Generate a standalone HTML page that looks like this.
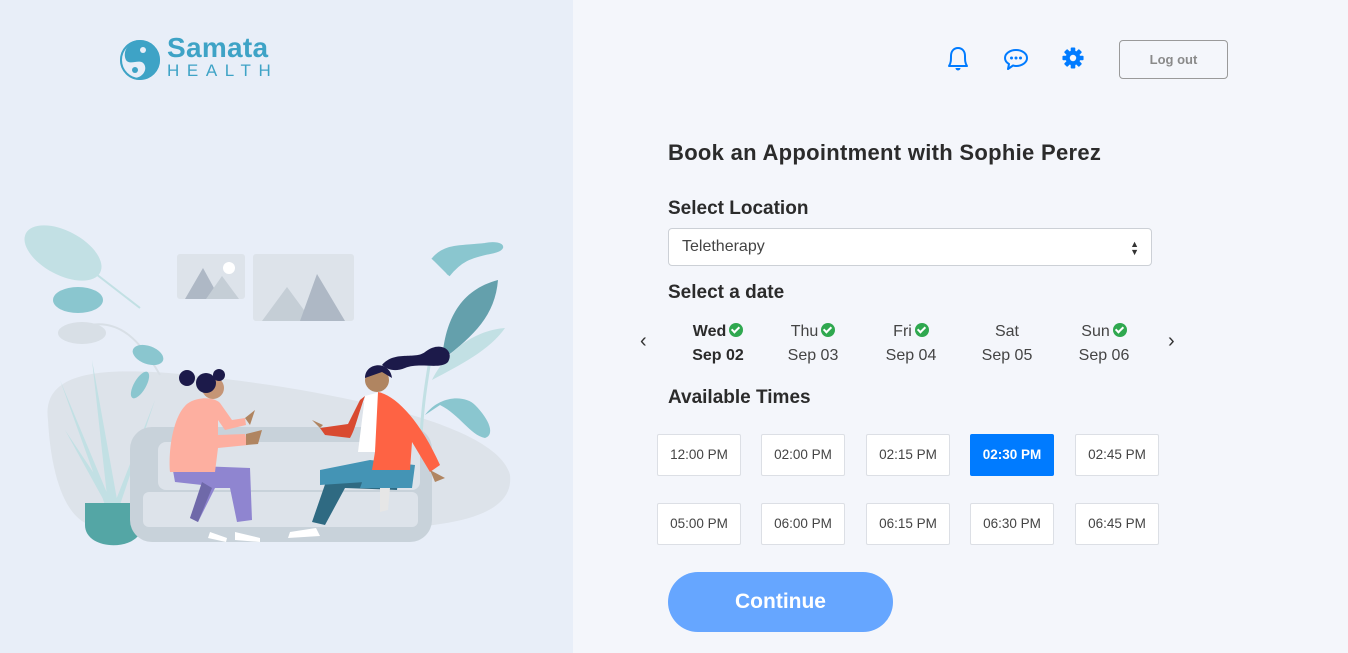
<!DOCTYPE html>
<html><head><meta charset="utf-8"><style>
*{margin:0;padding:0;box-sizing:border-box}
body{width:1348px;height:653px;overflow:hidden;font-family:"Liberation Sans",sans-serif;background:#f4f6fb;position:relative;color:#2b2b2b}
.left{position:absolute;left:0;top:0;width:573px;height:653px;background:#e8eef8}
.a{position:absolute}
.h{font-weight:bold;font-size:20px;color:#2b2b2b}
.day{position:absolute;width:90px;text-align:center;font-size:16px;color:#444;line-height:24px}
.day b{color:#2b2b2b}
.ck{display:inline-block;width:14px;height:14px;border-radius:50%;background:#2fa84f;vertical-align:-1px;margin-left:3px;position:relative}
.ck:after{content:"";position:absolute;left:4px;top:2px;width:3px;height:6px;border:solid #fff;border-width:0 2px 2px 0;transform:rotate(45deg)}
.t{position:absolute;width:84px;height:42px;background:#fff;border:1px solid #dcdfe5;border-radius:2px;font-size:13.5px;color:#444;text-align:center;line-height:40px}
.t.s{background:#007bff;border-color:#007bff;color:#fff;font-weight:bold}
</style></head><body>
<div class="left"></div>
<!-- logo -->
<svg class="a" style="left:118px;top:38px" width="44" height="44" viewBox="0 0 44 44">
<circle cx="22" cy="22" r="20" fill="#3ea3c6"/>
<path d="M22 3 C10 3 4 14 8 22 C12 28 22 20 26 26 C30 32 24 40 16 40 C8 37 3 30 3 22 C3 12 11 3 22 3Z" fill="#e8eef8"/>
<circle cx="22" cy="22" r="19" fill="none" stroke="#3ea3c6" stroke-width="2"/>
<circle cx="25" cy="12" r="3" fill="#e8eef8"/><circle cx="17" cy="32" r="3" fill="#3ea3c6"/>
</svg>
<div class="a" style="left:167px;top:32px;font-size:28px;font-weight:bold;color:#3ea3c6;letter-spacing:.3px">Samata</div>
<div class="a" style="left:167px;top:61px;font-size:17px;color:#3ea3c6;letter-spacing:7.6px">HEALTH</div>
<!-- illustration -->
<svg class="a" style="left:20px;top:220px" width="500" height="340" viewBox="0 0 500 340">
<path d="M28 200 C20 140 110 145 250 165 C380 185 480 215 490 255 C495 300 420 312 300 308 L70 305 C40 295 30 240 28 200Z" fill="#dde3ea"/>
<rect x="157" y="34" width="68" height="45" rx="3" fill="#dde3ea"/>
<path d="M165 79 L183 48 L200 79Z" fill="#aeb8c5"/><path d="M186 79 L202 56 L219 79Z" fill="#c5ced6"/><circle cx="209" cy="48" r="6" fill="#fff"/>
<rect x="233" y="34" width="101" height="67" rx="3" fill="#dde3ea"/>
<path d="M242 101 L267 67 L292 101Z" fill="#c5ced6"/><path d="M280 101 L297 54 L325 101Z" fill="#aeb8c5"/>
<ellipse cx="43" cy="33" rx="42" ry="22" transform="rotate(28 43 33)" fill="#c2e0e4"/>
<path d="M45 30 L120 88" stroke="#c2e0e4" stroke-width="2"/>
<ellipse cx="58" cy="80" rx="25" ry="13" fill="#8ac6cf"/>
<ellipse cx="62" cy="113" rx="24" ry="11" fill="#d8dfe6"/>
<path d="M70 105 C100 100 120 120 140 155" stroke="#d8dfe6" stroke-width="2" fill="none"/>
<ellipse cx="128" cy="135" rx="16" ry="9" transform="rotate(20 128 135)" fill="#8ac6cf"/>
<ellipse cx="120" cy="165" rx="6" ry="15" transform="rotate(30 120 165)" fill="#8ac6cf"/>
<path d="M72 140 L98 285 L88 285Z M135 180 L100 285 L94 285Z M45 210 L95 285 L88 288Z M150 225 L100 285Z M40 160 L92 285 L85 285Z" fill="#c2e0e4"/>
<path d="M65 283 H122 V305 C122 332 65 332 65 305Z" fill="#54a6a5"/>
<path d="M422 140 C425 100 440 70 478 60 C475 95 455 115 422 140Z" fill="#64a0ac"/>
<path d="M413 40 C425 25 440 28 465 25 C480 22 490 28 470 32 C450 36 440 40 428 55" stroke="#8ac6cf" stroke-width="4" fill="#8ac6cf"/>
<path d="M412 160 C430 125 460 110 485 108 C470 130 440 145 412 160Z" fill="#c2e0e4"/>
<path d="M405 195 C420 175 445 175 455 185 C470 200 475 215 465 218 C450 215 440 195 420 185Z" fill="#8ac6cf"/>
<path d="M410 140 C405 170 402 190 400 235" stroke="#c2e0e4" stroke-width="3" fill="none"/>
<rect x="110" y="207" width="302" height="115" rx="22" fill="#c8d2da"/>
<rect x="138" y="222" width="262" height="48" rx="8" fill="#dde3ea"/>
<rect x="123" y="272" width="275" height="35" rx="6" fill="#dde3ea"/>
<!-- girl -->
<path d="M152 245 L230 248 L232 300 L217 302 L210 268 L195 268 L178 302 L170 298 L182 265 L155 262Z" fill="#8f85d0"/>
<path d="M192 268 L178 302 L170 298 L182 262Z" fill="#6f69a9"/>
<path d="M190 312 L207 318 L206 322 L188 318Z M215 312 L240 318 L240 322 L215 320Z" fill="#fff"/>
<path d="M170 182 C182 176 195 178 200 183 L212 200 L225 198 L226 205 L205 210 L198 200 L198 215 L225 214 L228 225 L198 228 L195 252 L150 252 C148 225 155 190 170 182Z" fill="#fdafa0"/>
<path d="M225 198 L235 190 L230 205Z M226 214 L242 210 L238 224 L226 225Z" fill="#b08561"/>
<circle cx="193" cy="168" r="11" fill="#c59576"/>
<circle cx="186" cy="163" r="10" fill="#1c1a4a"/><circle cx="167" cy="158" r="8" fill="#1c1a4a"/><circle cx="199" cy="155" r="6" fill="#1c1a4a"/>
<!-- woman -->
<path d="M345 245 L380 243 L377 270 L325 268 L305 305 L292 302 L310 250Z" fill="#2f6a82"/>
<path d="M350 240 L395 245 L392 268 L340 268Z M300 250 L350 240 L345 262 L300 265Z" fill="#4494b5"/>
<path d="M360 268 L370 268 L368 290 L360 292Z" fill="#e6e6e6"/>
<path d="M270 312 L296 308 L300 316 L268 318Z" fill="#fff"/>
<path d="M345 176 L360 172 L355 232 L338 232Z" fill="#fff"/>
<path d="M358 172 C375 175 400 200 420 245 L410 252 L392 222 L390 250 L352 250 L355 232 Z" fill="#fe6344"/>
<path d="M345 176 C338 195 335 210 330 218 L305 215 L300 208 L328 204 L340 180Z" fill="#d94a30"/>
<path d="M300 208 L292 200 L303 205Z M410 250 L425 258 L415 262Z" fill="#b08561"/>
<circle cx="357" cy="160" r="12" fill="#b08561"/>
<path d="M345 158 C345 142 370 140 372 158 L362 152 Z" fill="#1c1a4a"/>
<path d="M362 145 C375 130 395 140 405 132 C420 120 435 130 428 142 C420 150 400 142 385 148 C375 152 368 150 362 145Z" fill="#1c1a4a"/>
</svg>
<!-- header icons -->
<svg class="a" style="left:945px;top:45px" width="26" height="28" viewBox="0 0 26 28"><path d="M4 21 C6 18 6 15 6 11 C6 6 9 3 13 3 C17 3 20 6 20 11 C20 15 20 18 22 21Z" fill="none" stroke="#007bff" stroke-width="2" stroke-linejoin="round"/><path d="M11 23 A2 2 0 0 0 15 23" fill="#007bff" stroke="#007bff"/></svg>
<svg class="a" style="left:1003px;top:47px" width="26" height="26" viewBox="0 0 26 26"><path d="M13 3 C7 3 2 6.5 2 11 C2 13.5 3.5 15.5 6 17 L5 22 L10 18.5 C11 18.8 12 19 13 19 C19 19 24 15.5 24 11 C24 6.5 19 3 13 3Z" fill="none" stroke="#007bff" stroke-width="2" stroke-linejoin="round"/><circle cx="8.5" cy="11" r="1.5" fill="#007bff"/><circle cx="13" cy="11" r="1.5" fill="#007bff"/><circle cx="17.5" cy="11" r="1.5" fill="#007bff"/></svg>
<svg class="a" style="left:1062px;top:47px" width="22" height="22" viewBox="0 0 24 24"><g fill="#007bff"><circle cx="12" cy="12" r="8"/><rect x="9.5" y="0.5" width="5" height="23" rx="1"/><rect x="9.5" y="0.5" width="5" height="23" rx="1" transform="rotate(45 12 12)"/><rect x="9.5" y="0.5" width="5" height="23" rx="1" transform="rotate(90 12 12)"/><rect x="9.5" y="0.5" width="5" height="23" rx="1" transform="rotate(135 12 12)"/></g><circle cx="12" cy="12" r="3.5" fill="#f4f6fb"/></svg>
<div class="a" style="left:1119px;top:40px;width:109px;height:39px;border:1px solid #9a9a9a;border-radius:4px;text-align:center;line-height:37px;font-size:13px;font-weight:bold;color:#8a8a8a">Log out</div>
<!-- form -->
<div class="a h" style="left:668px;top:140px;font-size:22px;letter-spacing:.3px">Book an Appointment with Sophie Perez</div>
<div class="a h" style="left:668px;top:198px;font-size:19px">Select Location</div>
<div class="a" style="left:668px;top:228px;width:484px;height:38px;background:#fff;border:1px solid #ccd0d6;border-radius:4px;font-size:16px;color:#444;padding-left:13px;line-height:36px">Teletherapy<span style="position:absolute;right:12px;top:0;font-size:9px;line-height:8px;padding-top:11px;color:#333">▲<br>▼</span></div>
<div class="a h" style="left:668px;top:282px;font-size:19px">Select a date</div>
<div class="a" style="left:640px;top:330px;font-size:20px;color:#333">‹</div>
<div class="a" style="left:1168px;top:330px;font-size:20px;color:#333">›</div>
<div class="day" style="left:673px;top:320px"><b>Wed</b><span class="ck"></span><br><b>Sep 02</b></div>
<div class="day" style="left:768px;top:320px">Thu<span class="ck"></span><br>Sep 03</div>
<div class="day" style="left:866px;top:320px">Fri<span class="ck"></span><br>Sep 04</div>
<div class="day" style="left:962px;top:320px">Sat<br>Sep 05</div>
<div class="day" style="left:1059px;top:320px">Sun<span class="ck"></span><br>Sep 06</div>
<div class="a h" style="left:668px;top:387px;font-size:19px">Available Times</div>
<div class="t" style="left:657px;top:434px">12:00 PM</div>
<div class="t" style="left:761px;top:434px">02:00 PM</div>
<div class="t" style="left:866px;top:434px">02:15 PM</div>
<div class="t s" style="left:970px;top:434px">02:30 PM</div>
<div class="t" style="left:1075px;top:434px">02:45 PM</div>
<div class="t" style="left:657px;top:503px">05:00 PM</div>
<div class="t" style="left:761px;top:503px">06:00 PM</div>
<div class="t" style="left:866px;top:503px">06:15 PM</div>
<div class="t" style="left:970px;top:503px">06:30 PM</div>
<div class="t" style="left:1075px;top:503px">06:45 PM</div>
<div class="a" style="left:668px;top:572px;width:225px;height:60px;border-radius:30px;background:#66a6ff;color:#fff;font-weight:bold;font-size:21px;text-align:center;line-height:60px">Continue</div>
</body></html>
